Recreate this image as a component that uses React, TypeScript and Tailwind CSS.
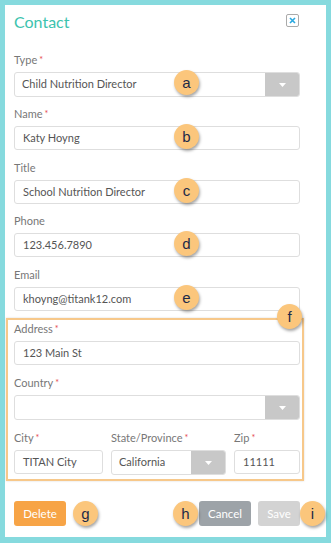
import type { ReactNode } from "react";

const font = { fontFamily: "Lato, 'Open Sans', Arial, sans-serif" };

function Badge({ letter, className }: { letter: string; className: string }) {
  return (
    <div
      className={`absolute w-[25px] h-[25px] rounded-full bg-[#fbc67c] text-[#1d2a48] text-[15px] leading-[25px] text-center shadow-[1px_2px_3px_rgba(0,0,0,0.35)] ${className}`}
      style={{ fontFamily: "Arial, 'Liberation Sans', sans-serif" }}
    >
      {letter}
    </div>
  );
}

function Label({ children, required }: { children: ReactNode; required?: boolean }) {
  return (
    <div className="h-[14px] leading-[14px] text-[11px] text-[#777] mb-[5px]">
      {children}
      {required && <span className="text-[#e5484d] text-[9px] align-top ml-[2px]">*</span>}
    </div>
  );
}

function TextBox({ value, className = "" }: { value: string; className?: string }) {
  return (
    <div
      className={`h-[24px] border border-[#dedede] rounded-[3px] bg-white pl-[8px] flex items-center text-[11px] text-[#555] ${className}`}
    >
      {value}
    </div>
  );
}

function SelectBox({ value, className = "" }: { value: string; className?: string }) {
  return (
    <div
      className={`h-[25px] border border-[#dedede] rounded-[3px] bg-white flex items-stretch text-[11px] text-[#555] ${className}`}
    >
      <div className="flex-1 pl-[7px] flex items-center">{value}</div>
      <div className="w-[34px] bg-[#c8c8c8] rounded-r-[2px] flex items-center justify-center">
        <svg width="7" height="4" viewBox="0 0 7 4">
          <path d="M0 0h7L3.5 4z" fill="#fff" />
        </svg>
      </div>
    </div>
  );
}

export default function App() {
  return (
    <div className="w-[331px] h-[543px] bg-[#86dade] p-[5px] pb-[6px]" style={font}>
      <div className="relative w-full h-full bg-white pl-[9px] pr-[26px]">
        {/* header */}
        <div className="flex items-start justify-between pt-[7px] h-[33px]">
          <div className="text-[16px] text-[#3cc3ae] leading-[20px]">Contact</div>
          <div className="w-[13px] h-[13px] border border-[#aaa] rounded-[2px] flex items-center justify-center mr-[1px] mt-[2px]">
            <svg width="7" height="7" viewBox="0 0 7 7">
              <path d="M1 1l5 5M6 1L1 6" stroke="#29a8e0" strokeWidth="1.6" />
            </svg>
          </div>
        </div>

        <div className="mt-[15px] relative">
          <Label required>Type</Label>
          <SelectBox value="Child Nutrition Director" />
          <Badge letter="a" className="left-[160px] top-[17px]" />
        </div>

        <div className="mt-[10px] relative">
          <Label required>Name</Label>
          <TextBox value="Katy Hoyng" />
          <Badge letter="b" className="left-[160px] top-[17px]" />
        </div>

        <div className="mt-[11px] relative">
          <Label>Title</Label>
          <TextBox value="School Nutrition Director" />
          <Badge letter="c" className="left-[160px] top-[17px]" />
        </div>

        <div className="mt-[10px] relative">
          <Label>Phone</Label>
          <TextBox value="123.456.7890" />
          <Badge letter="d" className="left-[160px] top-[17px]" />
        </div>

        <div className="mt-[11px] relative">
          <Label>Email</Label>
          <TextBox value="khoyng@titank12.com" />
          <Badge letter="e" className="left-[160px] top-[17px]" />
        </div>

        {/* address group */}
        <div className="relative mt-[7px] -ml-[8px] -mr-[4px] border-2 border-[#f7c88a] pl-[6px] pr-[2px] pt-[2px] pb-[4px] shadow-[0_0_2px_rgba(0,0,0,0.15)]">
          <Badge letter="f" className="right-[0px] -top-[16px]" />
          <Label required>Address</Label>
          <TextBox value="123 Main St" />

          <div className="mt-[11px]">
            <Label required>Country</Label>
            <SelectBox value="" />
          </div>

          <div className="mt-[11px] flex gap-[8px]">
            <div className="w-[89px]">
              <Label required>City</Label>
              <TextBox value="TITAN City" />
            </div>
            <div className="w-[115px]">
              <Label required>State/Province</Label>
              <SelectBox value="California" className="h-[24px]" />
            </div>
            <div className="flex-1">
              <Label required>Zip</Label>
              <TextBox value="11111" />
            </div>
          </div>
        </div>

        {/* footer */}
        <div className="relative mt-[20px] flex items-center h-[25px] text-[11.5px] text-white">
          <div className="w-[52px] h-[25px] rounded-[3px] bg-[#f7a446] flex items-center justify-center">Delete</div>
          <Badge letter="g" className="left-[59px] top-0" />
          <div className="flex-1" />
          <Badge letter="h" className="left-[159px] top-0" />
          <div className="w-[52px] h-[25px] rounded-[3px] bg-[#9da3a8] flex items-center justify-center">Cancel</div>
          <div className="w-[42px] h-[25px] rounded-[3px] bg-[#d3d3d3] flex items-center justify-center ml-[7px]">Save</div>
          <Badge letter="i" className="-right-[25px] top-0" />
        </div>
      </div>
    </div>
  );
}
